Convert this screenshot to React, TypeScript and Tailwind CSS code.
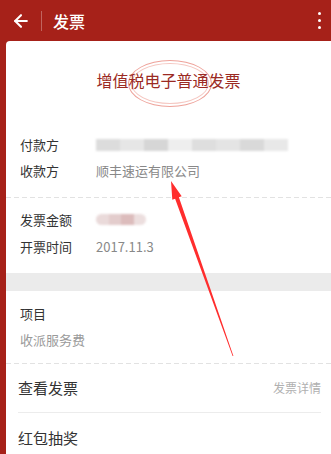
import { ArrowLeft } from 'lucide-react';

const font = { fontFamily: '"Noto Sans CJK SC", "Noto Sans", sans-serif' };

function Dashed() {
  return <div className="h-px bg-[linear-gradient(to_right,#e2e2e2_60%,transparent_0)] bg-[length:8px_1px]" />;
}

function Row({ label, children, tall }: { label: string; children?: React.ReactNode; tall?: boolean }) {
  return (
    <div className={`flex items-center ${tall ? 'h-[27px]' : 'h-[26px]'}`}>
      <span className="w-[76px] text-[13px] text-[#333]">{label}</span>
      {children}
    </div>
  );
}

export default function App() {
  return (
    <div className="relative min-h-screen bg-[#a62119] flex flex-col" style={font}>
      <header className="h-[41px] flex items-center text-white shrink-0">
        <ArrowLeft className="ml-[11px] h-[20px] w-[20px]" strokeWidth={2.5} />
        <div className="ml-[10px] h-[20px] w-px bg-white/30" />
        <h1 className="ml-[11px] text-[16px] font-medium">发票</h1>
        <div className="ml-auto mr-[10px] flex flex-col gap-[3.5px]">
          <span className="h-[3.5px] w-[3.5px] rounded-full bg-white" />
          <span className="h-[3.5px] w-[3.5px] rounded-full bg-white" />
          <span className="h-[3.5px] w-[3.5px] rounded-full bg-white" />
        </div>
      </header>

      <main className="ml-[6px] flex-1 bg-white rounded-tl-[4px]">
        <section className="relative h-[91px] flex justify-center pt-[27px]">
          <div className="absolute left-[122px] top-[19px] h-[47px] w-[84px] rounded-[50%] border border-[#eea39b]" />
          <div className="absolute left-[125px] top-[22px] h-[41px] w-[78px] rounded-[50%] border border-[#f5c7c1]" />
          <h2 className="relative text-[16px] leading-[24px] text-[#9b2a23]">增值税电子普通发票</h2>
        </section>

        <section className="pl-[14px] pb-[13px]">
          <Row label="付款方">
            <div className="relative h-[12px] w-[192px] flex blur-[1px]">
              <span className="flex-1 bg-[#dcdcdc]" />
              <span className="flex-1 bg-[#e6e6e6]" />
              <span className="flex-1 bg-[#d6d6d6]" />
              <span className="flex-1 bg-[#eeeeee]" />
              <span className="flex-1 bg-[#dedede]" />
              <span className="flex-1 bg-[#e4e4e4]" />
              <span className="flex-1 bg-[#d9d9d9]" />
              <span className="flex-1 bg-[#e8e8e8]" />
            </div>
          </Row>
          <Row label="收款方">
            <span className="text-[13px] text-[#888]">顺丰速运有限公司</span>
          </Row>
        </section>
        <Dashed />

        <section className="pl-[14px] pt-[8px] pb-[13px]">
          <Row label="发票金额" tall>
            <div className="h-[11px] w-[50px] flex rounded-full overflow-hidden blur-[1px]">
              <span className="flex-1 bg-[#eadada]" />
              <span className="flex-1 bg-[#e3cccc]" />
              <span className="flex-1 bg-[#dcbcbc]" />
              <span className="flex-1 bg-[#ecdede]" />
            </div>
          </Row>
          <Row label="开票时间" tall>
            <span className="text-[13px] text-[#888]">2017.11.3</span>
          </Row>
        </section>

        <div className="h-[18px] bg-[#ebebeb]" />

        <section className="pl-[14px] pt-[10px] pb-[10px]">
          <div className="h-[26px] flex items-center text-[13px] text-[#333]">项目</div>
          <div className="h-[26px] flex items-center text-[13px] text-[#9a9a9a]">收派服务费</div>
        </section>
        <Dashed />

        <div className="mx-[12px] mr-[10px] h-[49px] flex items-center justify-between border-b border-[#ececec]">
          <span className="text-[15px] text-[#333]">查看发票</span>
          <span className="text-[12px] text-[#b0b0b0]">发票详情</span>
        </div>
        <div className="mx-[12px] h-[50px] flex items-center">
          <span className="text-[15px] text-[#333]">红包抽奖</span>
        </div>
      </main>

      <svg className="pointer-events-none absolute left-0 top-0" width="331" height="454" viewBox="0 0 331 454">
        <polygon
          points="171,181 181.7,196.3 178.9,197.3 233.4,355.9 232.6,356.1 175.1,198.7 172.3,199.7"
          fill="#ff2d2d"
        />
      </svg>
    </div>
  );
}
